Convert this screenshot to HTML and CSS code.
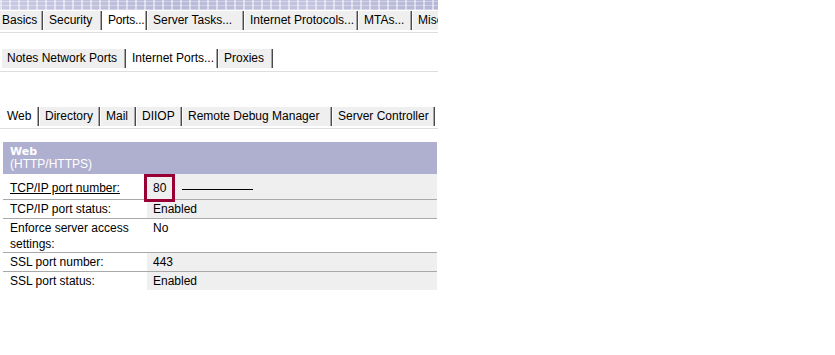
FILE: index.html
```html
<!DOCTYPE html>
<html>
<head>
<meta charset="utf-8">
<link rel="stylesheet" href="styles.css">
</head>
<body>
<div class="page">
  <div class="banner"></div>
  <div class="tabrow row1">
    <div class="tabs">
      <span class="tab w46">Basics</span>
      <span class="tab w58">Security</span>
      <span class="tab sel w44 tight">Ports...</span>
      <span class="tab w96">Server Tasks...</span>
      <span class="tab w113">Internet Protocols...</span>
      <span class="tab w53">MTAs...</span>
      <span class="tab">Miscellaneous...</span>
    </div>
  </div>
  <div class="tabrow row2">
    <div class="tabs">
      <span class="tab w124">Notes Network Ports</span>
      <span class="tab sel w91">Internet Ports...</span>
      <span class="tab w54">Proxies</span>
    </div>
  </div>
  <div class="tabrow row3">
    <div class="tabs">
      <span class="tab sel w37">Web</span>
      <span class="tab w60">Directory</span>
      <span class="tab w35">Mail</span>
      <span class="tab w45">DIIOP</span>
      <span class="tab w149">Remote Debug Manager</span>
      <span class="tab w102">Server Controller</span>
    </div>
  </div>
  <div class="section">
    <div class="head">
      <div class="head-title">Web</div>
      <div class="head-sub">(HTTP/HTTPS)</div>
    </div>
    <div class="frow first">
      <div class="lab"><u>TCP/IP port number:</u></div>
      <div class="val"><span class="hl">80</span><span class="rule"></span></div>
    </div>
    <div class="frow">
      <div class="lab">TCP/IP port status:</div>
      <div class="val">Enabled</div>
    </div>
    <div class="frow tall">
      <div class="lab">Enforce server access<br>settings:</div>
      <div class="val white">No</div>
    </div>
    <div class="frow">
      <div class="lab">SSL port number:</div>
      <div class="val">443</div>
    </div>
    <div class="frow last">
      <div class="lab">SSL port status:</div>
      <div class="val">Enabled</div>
    </div>
  </div>
</div>
</body>
</html>
```

FILE: styles.css
```css
html, body {
  margin: 0;
  padding: 0;
  background: #ffffff;
}
body {
  font-family: "Liberation Sans", Arial, sans-serif;
  font-size: 12px;
  color: #000;
}
.page {
  width: 438px;
  overflow: hidden;
}
.banner {
  height: 10px;
  background:
    repeating-linear-gradient(90deg, rgba(255,255,255,0.5) 0 2px, transparent 2px 9px),
    repeating-linear-gradient(0deg, rgba(255,255,255,0.35) 0 1px, transparent 1px 4px),
    linear-gradient(90deg, #c9c9e3, #b8b8d8 40%, #c4c4e0 70%, #b5b5d6);
}
.tabrow {
  border-bottom: 1px solid #dedede;
}
.tabs {
  display: flex;
  gap: 1px;
  white-space: nowrap;
}
.tab {
  display: block;
  flex: none;
  box-sizing: border-box;
  height: 19px;
  line-height: 19px;
  padding: 0 4px 0 5px;
  background: #efefef;
  border-right: 1px solid #4a4a4a;
  box-shadow: inset -1px 0 0 #a6a6a6;
  overflow: hidden;
}
.tab.sel {
  background: #ffffff;
}
.tab.tight {
  padding-right: 0;
  letter-spacing: -0.2px;
}
.w35 { width: 35px; }
.w37 { width: 37px; }
.w44 { width: 44px; }
.w45 { width: 45px; }
.w46 { width: 46px; }
.w53 { width: 53px; }
.w54 { width: 54px; }
.w58 { width: 58px; }
.w60 { width: 60px; }
.w91 { width: 91px; }
.w96 { width: 96px; }
.w102 { width: 102px; }
.w113 { width: 113px; }
.w124 { width: 124px; }
.w149 { width: 149px; }

.row1 {
  margin-top: 1px;
  padding-bottom: 2px;
}
.row1 .tabs {
  margin-left: -3px;
}
.row2 {
  margin-top: 16px;
  padding-bottom: 3px;
}
.row2 .tabs {
  margin-left: 2px;
}
.row3 {
  margin-top: 35px;
  padding-bottom: 2px;
}
.row3 .tabs {
  margin-left: 2px;
}
.section {
  margin: 13px 1px 0 3px;
}
.head {
  background: #afafd0;
  color: #ffffff;
  padding: 3px 7px 3px;
  line-height: 13px;
}
.head-title {
  font-weight: bold;
  font-family: "DejaVu Sans", Verdana, sans-serif;
  font-size: 11px;
}
.frow {
  display: flex;
  border-bottom: 1px solid #a9a9a9;
  line-height: 18px;
}
.frow.last {
  border-bottom: none;
}
.lab {
  width: 137px;
  padding-left: 7px;
  flex: none;
}
.val {
  flex: 1;
  background: #efefef;
  padding-left: 6px;
  display: flex;
  align-items: center;
}
.val.white {
  background: #ffffff;
  align-items: flex-start;
}
.frow.first {
  height: 25px;
}
.frow.first .lab {
  padding-top: 5px;
}
.frow.first .val {
  align-items: flex-start;
}
.frow.tall {
  line-height: 16px;
  height: 33px;
}
.frow.tall .lab {
  padding-top: 1px;
}
.frow.tall .val {
  padding-top: 1px;
}
.hl {
  position: relative;
  z-index: 1;
  box-sizing: border-box;
  width: 31px;
  height: 28px;
  line-height: 22px;
  border: 3px solid #990033;
  padding: 0 0 0 6px;
  margin-left: -9px;
  margin-bottom: -3px;
}
.rule {
  align-self: center;
  width: 71px;
  height: 1px;
  background: #000;
  margin-left: 7px;
  margin-top: 6px;
}
```
